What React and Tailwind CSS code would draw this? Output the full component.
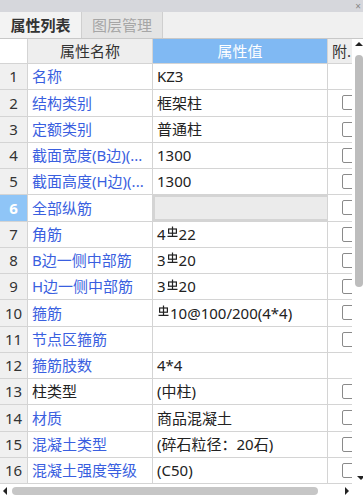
import React from "react";

const rows = [
  { name: "名称", value: "KZ3", check: false },
  { name: "结构类别", value: "框架柱", check: true },
  { name: "定额类别", value: "普通柱", check: true },
  { name: "截面宽度(B边)(...", value: "1300", check: true },
  { name: "截面高度(H边)(...", value: "1300", check: true },
  { name: "全部纵筋", value: "", check: true, selected: true },
  { name: "角筋", value: ["4", "22"], check: true },
  { name: "B边一侧中部筋", value: ["3", "20"], check: true },
  { name: "H边一侧中部筋", value: ["3", "20"], check: true },
  { name: "箍筋", value: ["", "10@100/200(4*4)"], check: true },
  { name: "节点区箍筋", value: "", check: true },
  { name: "箍筋肢数", value: "4*4", check: false },
  { name: "柱类型", value: "(中柱)", check: true, black: true },
  { name: "材质", value: "商品混凝土", check: true },
  { name: "混凝土类型", value: "(碎石粒径：20石)", check: true },
  { name: "混凝土强度等级", value: "(C50)", check: true },
];

function Rebar() {
  return (
    <svg width="11" height="12" viewBox="0 0 11 12" className="inline-block mx-[1px] -translate-y-[2px]">
      <rect x="1.6" y="3" width="7.8" height="4.2" fill="none" stroke="#222" strokeWidth="1.2" />
      <path d="M5.5 0.5v9.6M0.5 10.4h10" stroke="#222" strokeWidth="1.2" />
    </svg>
  );
}

function Value({ value }) {
  if (Array.isArray(value)) {
    return (
      <span className="flex items-center">
        {value[0]}
        <Rebar />
        {value[1]}
      </span>
    );
  }
  return <span>{value}</span>;
}

export default function App() {
  return (
    <div
      className="w-[363px] h-[497px] overflow-hidden bg-white flex flex-col text-[15px] text-[#222]"
      style={{ fontFamily: '"Noto Sans", "Noto Sans CJK SC", sans-serif' }}
    >
      <div className="h-[12px] bg-[#d6d7dc] flex justify-end items-center pr-[2px] shrink-0">
        <span className="text-[10px] leading-none text-[#888]">×</span>
      </div>
      <div className="h-[27px] bg-[#f0f0f0] border-b border-[#c8c8c8] flex shrink-0">
        <div className="w-[82px] bg-[#f3f3f3] border-r border-[#cfcfcf] flex items-center justify-center font-bold text-[#333]">
          属性列表
        </div>
        <div className="w-[81px] bg-[#e4e4e4] border-r border-[#cfcfcf] flex items-center justify-center text-[#a6a6a6]">
          图层管理
        </div>
      </div>
      <div className="flex flex-1 min-h-0">
        <div className="w-[352px] shrink-0 flex flex-col">
          <div className="h-[25px] flex shrink-0 border-b border-[#d4d4d4]">
            <div className="w-[28px] bg-white border-r border-[#d4d4d4]" />
            <div className="w-[125px] bg-[#eeeeee] border-r border-[#d4d4d4] flex items-center justify-center text-[#333]">
              属性名称
            </div>
            <div className="w-[175px] bg-[#80b9f3] border-r border-[#d4d4d4] flex items-center justify-center text-white">
              属性值
            </div>
            <div className="w-[24px] bg-[#eeeeee] flex items-center pl-[4px] text-[#333] overflow-hidden whitespace-nowrap">
              附.
            </div>
          </div>
          {rows.map((r, i) => (
            <div key={i} className="h-[26.25px] flex shrink-0 border-b border-[#d4d4d4]">
              <div
                className={`w-[28px] border-r border-[#d4d4d4] flex items-center justify-center ${
                  r.selected ? "bg-[#8fc5f7] text-white font-bold" : "bg-[#f0f0f0] text-[#333]"
                }`}
              >
                {i + 1}
              </div>
              <div
                className={`w-[125px] border-r border-[#d4d4d4] flex items-center pl-[4px] whitespace-nowrap overflow-hidden ${
                  r.black ? "text-[#222]" : "text-[#3a5fe0]"
                }`}
              >
                {r.name}
              </div>
              <div
                className={`w-[175px] border-r border-[#d4d4d4] flex items-center pl-[4px] whitespace-nowrap overflow-hidden ${
                  r.selected ? "bg-[#ebebeb] border-2 border-[#6f6f6f]" : ""
                }`}
              >
                <Value value={r.value} />
              </div>
              <div className="w-[24px] flex items-center overflow-hidden">
                {r.check ? (
                  <div className="ml-[14px] w-[14px] h-[15px] shrink-0 border border-[#8a8a8a] rounded-[2px] bg-white" />
                ) : null}
              </div>
            </div>
          ))}
          <div className="flex-1 flex items-center">
            <div className="w-0 h-0 ml-[3px] border-y-[4px] border-y-transparent border-r-[4px] border-r-[#222]" />
            <div className="ml-[5px] w-[306px] h-[8px] rounded-full bg-[#c6c6c6]" />
            <div className="ml-[27px] w-0 h-0 border-y-[4px] border-y-transparent border-l-[4px] border-l-[#222]" />
          </div>
        </div>
        <div className="w-[11px] shrink-0 flex flex-col pt-[3px] pb-[17px] bg-white">
          <div className="w-0 h-0 border-x-[4px] border-x-transparent border-b-[4px] border-b-[#222] ml-[3px]" />
          <div className="mt-[9px] w-[8px] h-[232px] shrink-0 rounded-[4px] bg-[#bdbdbd] ml-[3px]" />
          <div className="flex-1" />
          <div className="w-0 h-0 border-x-[4px] border-x-transparent border-t-[4px] border-t-[#222] ml-[5px]" />
        </div>
      </div>
    </div>
  );
}
